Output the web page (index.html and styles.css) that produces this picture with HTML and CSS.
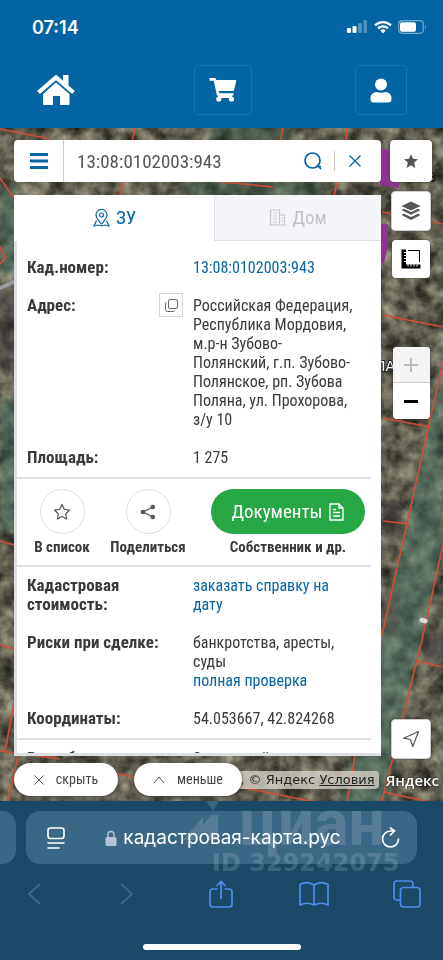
FILE: index.html
```html
<!DOCTYPE html>
<html lang="ru">
<head>
  <meta charset="utf-8">
  <meta name="viewport" content="width=device-width, initial-scale=1">
  <title>Кадастровая карта</title>
  <link rel="stylesheet" href="styles.css">
</head>
<body>
  <header class="header">
    <div class="status-bar">
      <span class="time">07:14</span>
      <div class="status-icons">
        <svg width="21" height="14" viewBox="0 0 21 14" fill="#fff">
          <rect x="0" y="8" width="4" height="5" rx="1"/>
          <rect x="5.500" y="6" width="4" height="7" rx="1"/>
          <rect x="11" y="3" width="4" height="10" rx="1" opacity=".3"/>
          <rect x="16.500" y="0" width="3.500" height="13" rx="1" opacity=".3"/>
        </svg>
        <svg width="18" height="14" viewBox="0 0 18 14" fill="none" stroke="#fff" stroke-width="2.300">
          <path d="M1 5.300a11.500 11.500 0 0 1 16 0M4 8.400a7.300 7.300 0 0 1 10 0"/>
          <path d="M6.300 10.500a4 4 0 0 1 5.400 0L9 13.400z" fill="#fff" stroke="none"/>
        </svg>
        <svg width="29" height="14" viewBox="0 0 29 14">
          <rect x=".700" y=".700" width="24.600" height="12.600" rx="3.500" fill="none" stroke="#fff" stroke-opacity=".45" stroke-width="1.200"/>
          <rect x="2" y="2.200" width="16" height="9.600" rx="2" fill="#fff"/>
          <path d="M27 5q2 2 0 4z" fill="#fff" opacity=".5"/>
        </svg>
      </div>
    </div>
    <nav class="nav">
      <a class="nav-home" href="#" aria-label="Главная">
        <svg width="40" height="32" viewBox="0 0 40 32" fill="#fff">
          <path d="M27 1h5.500v12L27 8z"/>
          <path d="M2.500 18.500 20 3.300l17.500 15.200" fill="none" stroke="#fff" stroke-width="4.200" stroke-linejoin="round"/>
          <path d="M20 8.500 33.500 20v10a1 1 0 0 1-1 1H24v-9h-7v9H8a1 1 0 0 1-1-1V20z"/>
        </svg>
      </a>
      <button class="nav-button" aria-label="Корзина">
        <svg width="28" height="26" viewBox="0 0 28 26" fill="#fff">
          <path d="M.500 1h5.800l1 2H27.500l-2.700 11H9.700l.5 2.200H24.500v2.300H8L4.700 3.700H.500z"/>
          <circle cx="9.800" cy="22" r="2.600"/><circle cx="22.500" cy="22" r="2.600"/><path d="M9 18h14v3H9z"/>
        </svg>
      </button>
      <button class="nav-button nav-user" aria-label="Профиль">
        <svg width="22" height="25" viewBox="0 0 22 25" fill="#fff">
          <circle cx="11" cy="6.500" r="6"/>
          <path d="M.500 21v-1a6 6 0 0 1 6-6q4.500 1.500 9 0a6 6 0 0 1 6 6v1a3.500 3.500 0 0 1-3.500 3.500H4A3.500 3.500 0 0 1 .500 21z"/>
        </svg>
      </button>
    </nav>
  </header>

  <main class="map">
    <svg class="map-picture" viewBox="0 128 443 673" preserveAspectRatio="xMaxYMid slice">
      <defs>
        <filter id="ground" x="0" y="0" width="100%" height="100%" color-interpolation-filters="sRGB">
          <feTurbulence type="fractalNoise" baseFrequency=".06" numOctaves="4" seed="8"/>
          <feColorMatrix values=".75 0 0 0 0  .73 0 0 0 0  .64 0 0 0 -.01  0 0 0 0 1"/>
        </filter>
        <filter id="soft"><feGaussianBlur stdDeviation="3"/></filter>
      </defs>
      <rect y="128" width="443" height="673" filter="url(#ground)"/>
      <g filter="url(#soft)">
        <path d="M0 185h16v90H0zM0 400h16v130H0zM443 360v190l-60 260h-45l45-180z" fill="#4b7868" opacity=".5"/>
        <path d="M210 126h80v16h-80zM180 181h140v16H180z" fill="#37594b" opacity=".5"/>
        <path d="M384 500h18v40h-18zM384 590h15v45h-15zM420 630h30v30h-30zM0 290h16v80H0z" fill="#453b40" opacity=".5"/>
      </g>
      <path d="M380 148l15 3 4 37-19-3zM380 224h8v20l-4 20-4-3z" fill="#8c3590"/>
      <path d="M-2 289l18-8" stroke="#9a9ba5" stroke-width="4"/>
      <g fill="none" stroke="#d04f37" stroke-width="1.600">
        <path d="M0 129l50 10M135 128l-3 14M123 182l-3 14M283 128l-3 14M347 128l-1 12M213 181l60 6M337 182l-3 14"/>
        <path d="M0 178l14 20M0 247l6 11-6 6M0 541l14 4M0 645l14 4M14 703L5 752M0 751l60 8M18 756L8 801M118 774l18 3"/>
        <path d="M382 212l61 12M383 315l60 12M383 418l47 9M443 362L382 635M383 521l26 3M443 545l-21 95-40 161M417 661l26 6M355 756l-8 45M240 787l75 15M384 792l59 13"/>
      </g>
      <path d="M422 620l3 1" stroke="#ddd" stroke-width="5" stroke-linecap="round"/>
      <text class="map-label map-label-dark" x="419" y="182">13</text>
      <text class="map-label" x="375" y="371">ЛА</text>
    </svg>

    <div class="map-content">
      <div class="main-column">
        <form class="search">
          <button type="button" class="search-menu" aria-label="Меню">
            <svg width="18" height="16" viewBox="0 0 18 16" fill="#0765a3"><path d="M0 0h18v3H0zM0 6.500h18v3H0zM0 13h18v3H0z"/></svg>
          </button>
          <input class="search-input" type="text" value="13:08:0102003:943" aria-label="Кадастровый номер">
          <button type="button" class="search-find" aria-label="Найти">
            <svg width="18" height="18" viewBox="0 0 18 18" fill="none" stroke="#0765a3" stroke-width="1.700"><circle cx="8.500" cy="8.500" r="7.500"/><path d="M12 14.500h5M13 13l4 4"/></svg>
          </button>
          <button type="button" class="search-clear" aria-label="Очистить">
            <svg width="12" height="12" viewBox="0 0 12 12" stroke="#0765a3" stroke-width="1.300"><path d="M.500.500l11 11M11.500.500l-11 11"/></svg>
          </button>
        </form>

        <section class="card">
          <div class="tabs">
            <button class="tab active">
              <svg width="17" height="18" viewBox="0 0 17 18" fill="none" stroke="#0765a3" stroke-width="1.200"><path d="M8.500 15C5 11 3 9 3 6a5.500 5.500 0 0 1 11 0c0 3-2 5-5.500 9z"/><circle cx="8.500" cy="6" r="2"/><path d="M3.500 11.500L1 17l4-1 3.500 1 3.500-1 4 1-2.500-5.500"/></svg>
              ЗУ
            </button>
            <button class="tab">
              <svg width="17" height="17" viewBox="0 0 17 17" fill="none" stroke="#c5c7cb" stroke-width="1.200"><path d="M1.500 16V1h9v15M10.500 6h5v10M0 16h17M4 4h4M4 7h4M4 10h4M4 13h4M12 9h2M12 12h2"/></svg>
              Дом
            </button>
          </div>
          <div class="details">
            <div class="row">
              <div class="label">Кад.номер:</div>
              <div class="value"><a href="#">13:08:0102003:943</a></div>
            </div>
            <div class="row">
              <div class="label">Адрес:
                <button class="copy" aria-label="Копировать">
                  <svg width="13" height="13" viewBox="0 0 13 13" fill="none" stroke="#666"><rect x="3.500" y=".500" width="9" height="9" rx="1.500"/><path d="M1.500 3.500q-1 0-1 1v6q0 2 2 2h6q1 0 1-1"/></svg>
                </button>
              </div>
              <div class="value">Российская Федерация,<br>Республика Мордовия,<br>м.р-н Зубово-<br>Полянский, г.п. Зубово-<br>Полянское, рп. Зубова<br>Поляна, ул. Прохорова,<br>з/у 10</div>
            </div>
            <div class="row">
              <div class="label">Площадь:</div>
              <div class="value">1 275</div>
            </div>
            <div class="actions">
              <div class="action">
                <button class="round" aria-label="В список">
                  <svg width="18" height="18" viewBox="0 0 18 18" fill="none" stroke="#555" stroke-width="1.200" stroke-linejoin="round"><path d="M9 1.500l2.300 4.800 5.200.7-3.800 3.700.9 5.300L9 13.500 4.400 16l.9-5.300L1.500 7l5.200-.7z"/></svg>
                </button>
                <span>В список</span>
              </div>
              <div class="action">
                <button class="round" aria-label="Поделиться">
                  <svg width="16" height="16" viewBox="0 0 16 16" fill="#555"><path d="M13 3L3 8l10 5" fill="none" stroke="#555" stroke-width="1.200"/><circle cx="12.800" cy="3" r="2.300"/><circle cx="3" cy="8" r="2.300"/><circle cx="12.800" cy="13" r="2.300"/></svg>
                </button>
                <span>Поделиться</span>
              </div>
              <div class="action action-docs">
                <button class="docs">Документы
                  <svg width="15" height="18" viewBox="0 0 15 18" fill="none" stroke="#fff" stroke-width="1.300"><path d="M1 1h9l4 4v12H1zM10 1v4h4M4 6.500h3M4 9.500h7M4 13h7"/></svg>
                </button>
                <span>Собственник и др.</span>
              </div>
            </div>
            <div class="row">
              <div class="label">Кадастровая<br>стоимость:</div>
              <div class="value"><a href="#">заказать справку на<br>дату</a></div>
            </div>
            <div class="row">
              <div class="label">Риски при сделке:</div>
              <div class="value">банкротства, аресты,<br>суды<br><a href="#">полная проверка</a></div>
            </div>
            <div class="row">
              <div class="label">Координаты:</div>
              <div class="value">54.053667, 42.824268</div>
            </div>
            <div class="row row-line">
              <div class="label">Вид объекта:</div>
              <div class="value">Земельный участок</div>
            </div>
          </div>
        </section>
      </div>

      <div class="controls">
        <button class="control control-large" aria-label="Избранное">
          <svg width="14" height="14" viewBox="0 0 14 14" fill="#555"><path d="M7 0l2 4.700 5 .5-3.800 3.400L11.400 14 7 11.200 2.600 14l1.200-5.400L0 5.200l5-.5z"/></svg>
        </button>
        <button class="control control-medium" aria-label="Слои">
          <svg width="20" height="20" viewBox="0 0 20 20" fill="#555"><path d="M10 .500L19.500 5 10 9.500.500 5z"/><path d="M.500 9l2.500-1.200 7 3.300 7-3.300L19.500 9 10 13.700zM.500 14l2.500-1.200 7 3.300 7-3.300 2.500 1.200-9.500 5z"/></svg>
        </button>
        <button class="control" aria-label="Линейка">
          <svg width="20" height="20" viewBox="0 0 20 20"><path d="M.500.500H5v15h14.500v4H.500z"/><path d="M7 1.500h11.500V13" fill="none" stroke="#000"/><path d="M3 3.500h2M3 6.500h2M3 9.500h2M3 12.500h2M7 17.500v-2M10 17.500v-2M13 17.500v-2M16 17.500v-2" stroke="#fff"/></svg>
        </button>
        <div class="zoom">
          <button disabled aria-label="Приблизить"><svg width="14" height="14" viewBox="0 0 14 14" fill="#bbb"><path d="M6 0h2v6h6v2H8v6H6V8H0V6h6z"/></svg></button>
          <button aria-label="Отдалить"><svg width="14" height="3" viewBox="0 0 14 3"><path d="M0 0h14v3H0z"/></svg></button>
        </div>
        <button class="control control-medium control-locate" aria-label="Моё местоположение">
          <svg width="18" height="18" viewBox="0 0 18 18" fill="none" stroke="#555" stroke-width="1.200" stroke-linejoin="round"><path d="M1.500 8.200L16.500 1.500l-5.700 15-2.300-7z"/></svg>
        </button>
      </div>
    </div>

    <div class="map-footer">
      <button class="pill"><svg width="10" height="10" viewBox="0 0 10 10" stroke="#555"><path d="M.500.500l9 9M9.500.500l-9 9"/></svg>скрыть</button>
      <button class="pill"><svg width="12" height="8" viewBox="0 0 12 8" fill="none" stroke="#555"><path d="M1 7l5-6 5 6"/></svg>меньше</button>
      <div class="copyright">, © Яндекс <a href="#">Условия</a></div>
      <div class="yandex">Яндекс</div>
    </div>
  </main>

  <footer class="browser">
    <div class="address-row">
      <div class="previous-page"></div>
      <div class="address">
        <svg width="18" height="22" viewBox="0 0 18 22" fill="none" stroke="#fff" stroke-width="1.600" stroke-linecap="round"><rect x="1" y="1" width="16" height="10.500" rx="2.500"/><path d="M1 16h16M1 21h11"/></svg>
        <div class="site">
          <svg width="12" height="16" viewBox="0 0 12 16" fill="#b5c3d6"><rect x=".500" y="7" width="11" height="9" rx="1.500"/><path d="M3 8V4.500a3 3 0 0 1 6 0V8" fill="none" stroke="#b5c3d6" stroke-width="1.400"/></svg>
          кадастровая-карта.рус
        </div>
        <svg width="20" height="22" viewBox="0 0 20 22" fill="none" stroke="#fff" stroke-width="1.700" stroke-linecap="round" stroke-linejoin="round"><path d="M17.500 12a8 8 0 1 1-8-8h3M9.500 1l4 3-4 4"/></svg>
      </div>
    </div>
    <nav class="toolbar">
      <button aria-label="Назад"><svg width="14" height="22" viewBox="0 0 14 22" fill="none" stroke="#446b85" stroke-width="1.700"><path d="M13 1L2 11l11 10"/></svg></button>
      <button aria-label="Вперёд"><svg width="14" height="22" viewBox="0 0 14 22" fill="none" stroke="#446b85" stroke-width="1.700"><path d="M1 1l11 10L1 21"/></svg></button>
      <button aria-label="Поделиться"><svg width="24" height="29" viewBox="0 0 24 29" fill="none" stroke="#4b8eee" stroke-width="1.700"><path d="M8.500 9H4Q1 9 1 12v12q0 3 3 3h16q3 0 3-3V12q0-3-3-3h-4.500M12 19V1.500M7.500 6L12 1.500 16.500 6"/></svg></button>
      <button aria-label="Закладки"><svg width="30" height="26" viewBox="0 0 30 26" fill="none" stroke="#4b8eee" stroke-width="1.700" stroke-linejoin="round"><path d="M15 4Q8-.500 1 3.500V24q7-3.500 14 0 7-3.500 14 0V3.500Q22-.500 15 4zM15 4v20"/></svg></button>
      <button aria-label="Вкладки"><svg width="28" height="28" viewBox="0 0 28 28" fill="none" stroke="#4b8eee" stroke-width="1.700"><rect x="7.500" y="7.500" width="19.500" height="19.500" rx="3"/><path d="M7.500 20H4q-3 0-3-3V4q0-3 3-3h13q3 0 3 3v3.500"/></svg></button>
    </nav>
    <div class="home-indicator"></div>
    <div class="watermark">
      <div class="watermark-brand">
        <svg width="36" height="46" viewBox="0 0 36 46" fill="#fff"><path d="M0 39L20 16v8l8-10h7v25h-9L20 30l-7 9zM23 0h13l-6 10z"/></svg>
        циан
      </div>
      <div class="watermark-id">ID 329242075</div>
    </div>
  </footer>
</body>
</html>
```

FILE: styles.css
```css
* {
  box-sizing: border-box;
}

body {
  margin: 0;
  background: #1b4a68;
  color: #3a3a3a;
  font-family: "Roboto Condensed", "Liberation Sans Narrow", Roboto, sans-serif;
  font-size: 16px;
  line-height: 19px;
}

button {
  display: flex;
  align-items: center;
  justify-content: center;
  margin: 0;
  padding: 0;
  border: 0;
  background: none;
  color: inherit;
  font: inherit;
  cursor: pointer;
}

svg {
  display: block;
  flex: none;
}

a {
  color: #0765a3;
  text-decoration: none;
}

.header {
  background: #0364a3;
  color: #fff;
}

.status-bar {
  display: flex;
  align-items: center;
  justify-content: space-between;
  height: 54px;
  padding: 0 16px 0 32px;
}

.time {
  font: 600 18px Inter, sans-serif;
}

.status-icons {
  display: flex;
  align-items: center;
  gap: 6px;
}

.nav {
  display: flex;
  align-items: center;
  justify-content: space-between;
  height: 74px;
  padding: 0 36px 2px;
}

.nav-home {
  width: 54px;
}

.nav-button {
  width: 58px;
  height: 50px;
  border: 1px solid #1b76b0;
  border-radius: 4px;
}

.nav-user {
  width: 52px;
}

.map {
  position: relative;
  overflow: hidden;
  background: #5e5d50;
}

.map-picture {
  position: absolute;
  inset: 0;
  width: 100%;
  height: 100%;
}

.map-label {
  fill: #fff;
  stroke: #222;
  stroke-width: 2px;
  paint-order: stroke;
  font: 14px "DejaVu Sans", sans-serif;
}

.map-label-dark {
  fill: #111;
  stroke: none;
}

.map-content {
  position: relative;
  display: flex;
  gap: 10px;
  padding: 12px 12px 0 14px;
}

.main-column {
  flex: 1;
  min-width: 0;
}

.search {
  display: flex;
  align-items: center;
  height: 42px;
  margin-bottom: 13px;
  border-radius: 4px;
  background: #fff;
}

.search-menu {
  width: 50px;
  height: 42px;
  border-right: 1px solid #ccc;
}

.search-input {
  flex: 1;
  min-width: 0;
  padding: 0 13px;
  border: 0;
  outline: none;
  background: none;
  color: #555;
  font: inherit;
  font-size: 19px;
}

.search-find {
  width: 43px;
  height: 20px;
  border-right: 1px solid #ccc;
}

.search-clear {
  width: 40px;
  height: 20px;
  margin-right: 6px;
}

.card {
  max-height: 561px;
  overflow: hidden;
  background: #fff;
  border-bottom: 3px solid #dcdfe4;
}

.tabs {
  display: grid;
  grid-template-columns: 6fr 5fr;
}

.tab {
  gap: 6px;
  height: 46px;
  background: #f4f5f9;
  border: 1px solid #dfe1e8;
  border-width: 0 0 1px 1px;
  color: #c0c2c6;
  font-size: 19px;
}

.tab.active {
  background: #fff;
  border-color: #fff;
  color: #0765a3;
}

.details {
  padding: 8px 10px 0 0;
  border-left: 3px solid #dcdfe4;
}

.row {
  display: flex;
  padding: 9px 0 10px 10px;
}

.row-line {
  border-top: 2px solid #dcdfe4;
}

.label {
  display: flex;
  justify-content: space-between;
  width: 156px;
  flex: none;
  font-size: 17px;
  font-weight: bold;
}

.value {
  flex: 1;
  margin-left: 10px;
  white-space: nowrap;
}

.copy {
  width: 24px;
  height: 24px;
  margin: -3px 0;
  border: 1px solid #d5d5d8;
}

.actions {
  display: flex;
  align-items: flex-start;
  padding: 10px 6px 8px 2px;
  border: 2px solid #dcdfe4;
  border-width: 2px 0;
}

.action {
  display: flex;
  flex-direction: column;
  align-items: center;
  gap: 4px;
  width: 86px;
  font-size: 15px;
  font-weight: bold;
}

.action-docs {
  width: 154px;
  margin-left: auto;
}

.round {
  width: 45px;
  height: 45px;
  border: 1px solid #dcdee4;
  border-radius: 50%;
}

.docs {
  gap: 7px;
  width: 100%;
  height: 45px;
  border-radius: 23px;
  background: #28a745;
  color: #fff;
  font-size: 19px;
  font-weight: normal;
}

.controls {
  display: flex;
  flex-direction: column;
  align-items: center;
  gap: 9px;
  width: 40px;
}

.control {
  width: 38px;
  height: 38px;
  border-radius: 4px;
  background: #fff;
  box-shadow: 0 0 2px #333;
}

.control-medium {
  width: 40px;
  height: 40px;
  border: 1px solid #ccc;
}

.control-large {
  width: 42px;
  height: 42px;
}

.control-locate {
  margin: auto 0 -3px;
}

.zoom {
  width: 37px;
  margin-top: 60px;
  overflow: hidden;
  border-radius: 4px;
  background: #fff;
  box-shadow: 0 0 2px #333;
}

.zoom button {
  width: 100%;
  height: 36px;
}

.zoom button:disabled {
  border-bottom: 1px solid #ccc;
  background: #f4f4f4;
}

.map-footer {
  position: relative;
  display: flex;
  align-items: center;
  padding: 7px 4px 5px 14px;
}

.pill {
  position: relative;
  z-index: 1;
  gap: 12px;
  width: 104px;
  height: 33px;
  margin-right: 16px;
  border-radius: 17px;
  background: #fff;
  box-shadow: 0 1px 3px #444;
  color: #444;
  font-size: 14px;
}

.pill + .pill {
  width: 108px;
  margin-right: -14px;
}

.copyright {
  flex: 1;
  padding: 0 4px 0 0;
  border-radius: 4px;
  background: rgba(220, 215, 205, .75);
  color: #222;
  font: 13px/18px "DejaVu Sans", sans-serif;
  text-align: right;
  white-space: nowrap;
}

.copyright a {
  color: inherit;
  text-decoration: underline;
}

.yandex {
  margin-left: 7px;
  color: #fff;
  font: 600 15px/18px "Open Sans", sans-serif;
  text-shadow: 0 0 2px #222, 0 0 2px #222;
}

.browser {
  position: relative;
  padding-top: 10px;
  background: #1b4a68;
  color: #fff;
}

.address-row {
  display: flex;
  gap: 10px;
}

.previous-page {
  width: 16px;
  border-radius: 0 14px 14px 0;
  background: #3a6786;
}

.address {
  flex: 1;
  display: flex;
  align-items: center;
  justify-content: space-between;
  height: 53px;
  margin-right: 26px;
  padding: 0 16px 0 21px;
  border-radius: 14px;
  background: #3a6786;
}

.site {
  display: flex;
  align-items: center;
  gap: 6px;
  font: 19px/24px Inter, sans-serif;
}

.toolbar {
  display: flex;
  align-items: center;
  justify-content: space-between;
  height: 60px;
  padding: 0 21px 0 19px;
}

.toolbar button {
  width: 30px;
  height: 30px;
}

.home-indicator {
  width: 158px;
  height: 6px;
  margin: 20px auto 0;
  border-radius: 3px;
  background: #fff;
}

.browser::after {
  content: "";
  display: block;
  height: 10px;
}

/* brand mark lies over the address bar */
.watermark {
  position: absolute;
  top: -4px;
  left: 183px;
  color: #fff;
  opacity: .14;
  pointer-events: none;
}

.watermark-brand {
  display: flex;
  align-items: center;
  gap: 20px;
  height: 54px;
  font: bold 64px/54px Roboto, sans-serif;
}

.watermark-id {
  padding-left: 29px;
  font: bold 24px/24px "DejaVu Sans", sans-serif;
  white-space: nowrap;
}
```
